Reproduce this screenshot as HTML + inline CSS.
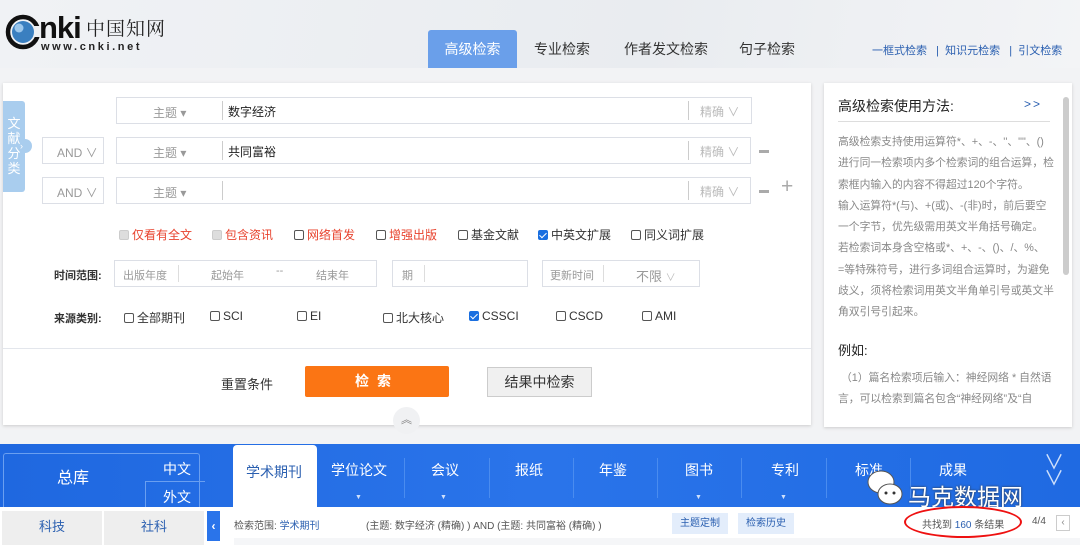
<!DOCTYPE html>
<html><head><meta charset="utf-8"><style>
*{margin:0;padding:0;box-sizing:border-box}
body{width:1080px;height:545px;overflow:hidden;background:#f2f3f5;font-family:"Liberation Sans","Noto Sans CJK SC",sans-serif;position:relative;font-size:12px;color:#333}
.a{position:absolute}
.hdr{left:0;top:0;width:1080px;height:68px;background:linear-gradient(100deg,#f0f2f5,#e9ecf0 60%,#f3f4f6)}
.tab{top:30px;height:38px;line-height:38px;font-size:14px;color:#333}
.box{border:1px solid #dcdfe6;background:#fff;height:27px}
.gray{color:#999}
.cb{display:inline-block;width:10px;height:10px;border:1px solid #555;border-radius:2px;vertical-align:-1px;margin-right:3px;background:#fff}
.cbk{background:#1a6fe0;border-color:#1a6fe0;position:relative}
.cbk:after{content:"";position:absolute;left:2px;top:0;width:3px;height:6px;border:solid #fff;border-width:0 1.5px 1.5px 0;transform:rotate(45deg)}
.cbg{background:#ddd;border-color:#ccc}
.red{color:#e8432e}
.opt{top:226px;font-size:12px}
.src{top:309px;font-size:12px}
.bt{top:460px;font-size:14px;color:#fff}
.help{white-space:nowrap;font-size:10.8px;line-height:21.3px;color:#888}
</style></head><body>
<div class="a hdr"></div>
<!-- logo -->
<svg class="a" style="left:5px;top:13px" width="36" height="38" viewBox="0 0 36 38"><circle cx="18" cy="19" r="15" fill="none" stroke="#111" stroke-width="4.5"/><circle cx="18" cy="19" r="11" fill="#3a7fc0"/><circle cx="14" cy="15" r="4.5" fill="#9cc7ec"/><rect x="29" y="13" width="8" height="11" fill="#eceff3"/></svg>
<div class="a" style="left:39px;top:10px;font-size:31px;font-weight:bold;color:#111;letter-spacing:-1px;font-family:'Liberation Sans',sans-serif">nki</div>
<div class="a" style="left:86px;top:14px;font-size:19px;color:#222;font-family:'Noto Serif CJK SC',serif;letter-spacing:1px">中国知网</div>
<div class="a" style="left:41px;top:41px;font-size:11px;font-weight:bold;color:#222;letter-spacing:2.6px">www.cnki.net</div>
<div class="a tab" style="left:428px;width:89px;background:#6a9fea;color:#fff;text-align:center;border-radius:3px 3px 0 0">高级检索</div>
<div class="a tab" style="left:534px">专业检索</div>
<div class="a tab" style="left:624px">作者发文检索</div>
<div class="a tab" style="left:739px">句子检索</div>
<div class="a" style="left:872px;top:42px;font-size:11px;color:#2a5fb0">一框式检索 &nbsp;&nbsp;| &nbsp;知识元检索 &nbsp;&nbsp;| &nbsp;引文检索</div>

<!-- main panel -->
<div class="a" style="left:3px;top:83px;width:808px;height:342px;background:#fff;box-shadow:0 1px 3px #ccc"></div>
<div class="a" style="left:3px;top:101px;width:22px;height:91px;background:#a9cdee;border-radius:0 3px 3px 0;color:#fff;font-size:13px;line-height:15px;text-align:center;padding-top:15px">文<br>献<br>分<br>类</div>
<div class="a" style="left:20px;top:139px;width:12px;height:14px;background:#a9cdee;border-radius:0 7px 7px 0;color:#fff;font-size:9px;line-height:14px">›</div>

<div class="a box" style="left:116px;top:97px;width:636px"></div>
<div class="a gray" style="left:153px;top:104px;font-size:12px">主题 ▾</div>
<div class="a" style="left:222px;top:101px;width:1px;height:19px;background:#ccc"></div>
<div class="a" style="left:228px;top:103px;font-size:12px;color:#222">数字经济</div>
<div class="a" style="left:688px;top:101px;width:1px;height:19px;background:#ccc"></div>
<div class="a" style="left:700px;top:103px;color:#bbb;font-size:12px">精确 ∨</div>

<div class="a box" style="left:42px;top:137px;width:62px"></div>
<div class="a gray" style="left:57px;top:144px">AND ∨</div>
<div class="a box" style="left:116px;top:137px;width:635px"></div>
<div class="a gray" style="left:153px;top:144px">主题 ▾</div>
<div class="a" style="left:222px;top:141px;width:1px;height:19px;background:#ccc"></div>
<div class="a" style="left:228px;top:143px;color:#222">共同富裕</div>
<div class="a" style="left:688px;top:141px;width:1px;height:19px;background:#ccc"></div>
<div class="a" style="left:700px;top:143px;color:#bbb">精确 ∨</div>
<div class="a" style="left:759px;top:150px;width:10px;height:3px;background:#aaa"></div>

<div class="a box" style="left:42px;top:177px;width:62px"></div>
<div class="a gray" style="left:57px;top:184px">AND ∨</div>
<div class="a box" style="left:116px;top:177px;width:635px"></div>
<div class="a gray" style="left:153px;top:184px">主题 ▾</div>
<div class="a" style="left:222px;top:181px;width:1px;height:19px;background:#ccc"></div>
<div class="a" style="left:688px;top:181px;width:1px;height:19px;background:#ccc"></div>
<div class="a" style="left:700px;top:183px;color:#bbb">精确 ∨</div>
<div class="a" style="left:759px;top:190px;width:10px;height:3px;background:#aaa"></div>
<div class="a" style="left:781px;top:175px;font-size:21px;color:#aaa">+</div>

<div class="a opt red" style="left:119px"><span class="cb cbg"></span>仅看有全文</div>
<div class="a opt red" style="left:212px"><span class="cb cbg"></span>包含资讯</div>
<div class="a opt red" style="left:294px"><span class="cb"></span>网络首发</div>
<div class="a opt red" style="left:376px"><span class="cb"></span>增强出版</div>
<div class="a opt" style="left:458px"><span class="cb"></span>基金文献</div>
<div class="a opt" style="left:538px"><span class="cb cbk"></span>中英文扩展</div>
<div class="a opt" style="left:631px"><span class="cb"></span>同义词扩展</div>

<div class="a" style="left:54px;top:267px;font-size:11px;font-weight:bold;color:#333">时间范围:</div>
<div class="a box" style="left:114px;top:260px;width:263px"></div>
<div class="a gray" style="left:123px;top:267px;font-size:11px">出版年度</div>
<div class="a" style="left:178px;top:265px;width:1px;height:17px;background:#ddd"></div>
<div class="a gray" style="left:211px;top:267px;font-size:11px">起始年</div>
<div class="a gray" style="left:276px;top:265px;font-size:11px">--</div>
<div class="a gray" style="left:316px;top:267px;font-size:11px">结束年</div>
<div class="a box" style="left:392px;top:260px;width:136px"></div>
<div class="a gray" style="left:402px;top:267px;font-size:11px">期</div>
<div class="a" style="left:424px;top:265px;width:1px;height:17px;background:#ddd"></div>
<div class="a box" style="left:542px;top:260px;width:158px"></div>
<div class="a gray" style="left:550px;top:267px;font-size:11px">更新时间</div>
<div class="a" style="left:603px;top:265px;width:1px;height:17px;background:#ddd"></div>
<div class="a gray" style="left:636px;top:266px;font-size:13px">不限 <span style="font-size:10px;color:#bbb">∨</span></div>

<div class="a" style="left:54px;top:310px;font-size:11px;font-weight:bold;color:#333">来源类别:</div>
<div class="a src" style="left:124px"><span class="cb"></span>全部期刊</div>
<div class="a src" style="left:210px"><span class="cb"></span>SCI</div>
<div class="a src" style="left:297px"><span class="cb"></span>EI</div>
<div class="a src" style="left:383px"><span class="cb"></span>北大核心</div>
<div class="a src" style="left:469px"><span class="cb cbk"></span>CSSCI</div>
<div class="a src" style="left:556px"><span class="cb"></span>CSCD</div>
<div class="a src" style="left:642px"><span class="cb"></span>AMI</div>

<div class="a" style="left:3px;top:348px;width:808px;height:1px;background:#e3e6ec"></div>
<div class="a" style="left:221px;top:374px;font-size:13px">重置条件</div>
<div class="a" style="left:305px;top:366px;width:144px;height:31px;background:#fb7514;color:#fff;font-weight:bold;font-size:14px;text-align:center;line-height:31px;letter-spacing:8px;border-radius:2px">检索</div>
<div class="a" style="left:487px;top:367px;width:105px;height:30px;background:#f0f0f0;border:1px solid #ccc;text-align:center;line-height:28px;font-size:14px">结果中检索</div>
<div class="a" style="left:393px;top:407px;width:27px;height:27px;border-radius:50%;background:#f0f1f3;text-align:center;line-height:27px;color:#777;font-size:11px">︽</div>

<!-- right panel -->
<div class="a" style="left:824px;top:83px;width:248px;height:344px;background:#fff;box-shadow:0 1px 3px #ccc"></div>
<div class="a" style="left:838px;top:96px;font-size:14px;color:#222">高级检索使用方法:</div>
<div class="a" style="left:1024px;top:97px;font-size:12px;color:#2a5fb0;letter-spacing:2px">&gt;&gt;</div>
<div class="a" style="left:838px;top:121px;width:212px;height:1px;background:#ddd"></div>
<div class="a" style="left:1063px;top:97px;width:6px;height:178px;background:#ccc;border-radius:3px"></div>
<div class="a help" style="left:838px;top:132px">高级检索支持使用运算符*、+、-、''、""、()<br>进行同一检索项内多个检索词的组合运算，检<br>索框内输入的内容不得超过120个字符。<br>输入运算符*(与)、+(或)、-(非)时，前后要空<br>一个字节，优先级需用英文半角括号确定。<br>若检索词本身含空格或*、+、-、()、/、%、<br>=等特殊符号，进行多词组合运算时，为避免<br>歧义，须将检索词用英文半角单引号或英文半<br>角双引号引起来。</div>
<div class="a" style="left:838px;top:340px;font-size:13px;color:#222">例如:</div>
<div class="a help" style="left:838px;top:368px">&nbsp;（1）篇名检索项后输入：神经网络 * 自然语<br>言，可以检索到篇名包含“神经网络”及“自</div>

<!-- blue band -->
<div class="a" style="left:0;top:444px;width:1080px;height:63px;background:linear-gradient(90deg,#1f68e0,#2a74ea 50%,#1f6ae2)"></div>
<div class="a" style="left:3px;top:453px;width:197px;height:54px;border:1px solid #6a9ff0;border-bottom:none;border-radius:3px 3px 0 0"></div>
<div class="a" style="left:145px;top:481px;width:60px;height:26px;border-left:1px solid #6a9ff0;border-top:1px solid #6a9ff0"></div>
<div class="a" style="left:57px;top:464px;font-size:16px;color:#fff">总库</div>
<div class="a" style="left:163px;top:459px;font-size:14px;color:#fff">中文</div>
<div class="a" style="left:163px;top:487px;font-size:14px;color:#fff">外文</div>
<div class="a" style="left:233px;top:445px;width:84px;height:62px;background:#fff;border-radius:4px 4px 0 0"></div>
<div class="a" style="left:246px;top:462px;font-size:14px;color:#2a5fb0">学术期刊</div>
<div class="a bt" style="left:331px">学位论文</div>
<div class="a bt" style="left:431px">会议</div>
<div class="a bt" style="left:515px">报纸</div>
<div class="a bt" style="left:599px">年鉴</div>
<div class="a bt" style="left:685px">图书</div>
<div class="a bt" style="left:771px">专利</div>
<div class="a bt" style="left:855px">标准</div>
<div class="a bt" style="left:939px">成果</div>
<div class="a" style="left:355px;top:494px;color:#cfe0fb;font-size:7px">▼</div>
<div class="a" style="left:440px;top:494px;color:#cfe0fb;font-size:7px">▼</div>
<div class="a" style="left:695px;top:494px;color:#cfe0fb;font-size:7px">▼</div>
<div class="a" style="left:780px;top:494px;color:#cfe0fb;font-size:7px">▼</div>
<div class="a" style="left:1044px;top:455px;color:#cfe0fb;font-size:20px;line-height:16px">∨<br>∨</div>
<div class="a" style="left:404px;top:458px;width:1px;height:40px;background:#4a8cef"></div>
<div class="a" style="left:489px;top:458px;width:1px;height:40px;background:#4a8cef"></div>
<div class="a" style="left:573px;top:458px;width:1px;height:40px;background:#4a8cef"></div>
<div class="a" style="left:657px;top:458px;width:1px;height:40px;background:#4a8cef"></div>
<div class="a" style="left:741px;top:458px;width:1px;height:40px;background:#4a8cef"></div>
<div class="a" style="left:826px;top:458px;width:1px;height:40px;background:#4a8cef"></div>
<div class="a" style="left:910px;top:458px;width:1px;height:40px;background:#4a8cef"></div>
<!-- watermark -->
<svg class="a" style="left:866px;top:468px" width="40" height="42" viewBox="0 0 40 42"><ellipse cx="15" cy="14" rx="13" ry="11" fill="#fff" stroke="#555"/><ellipse cx="24" cy="26" rx="12" ry="10" fill="#fff" stroke="#555"/><circle cx="20" cy="25" r="1.5" fill="#333"/><circle cx="28" cy="25" r="1.5" fill="#333"/></svg>
<div class="a" style="left:908px;top:478px;font-size:23px;color:#fff;text-shadow:0 0 2px #333">马克数据网</div>

<!-- bottom row -->
<div class="a" style="left:0;top:507px;width:1080px;height:38px;background:#fff"></div>
<div class="a" style="left:2px;top:511px;width:100px;height:34px;background:#eee;color:#2a5fb0;text-align:center;line-height:32px;font-size:13px">科技</div>
<div class="a" style="left:104px;top:511px;width:100px;height:34px;background:#eee;color:#2a5fb0;text-align:center;line-height:32px;font-size:13px">社科</div>
<div class="a" style="left:207px;top:511px;width:13px;height:30px;background:#2a74ea;color:#fff;text-align:center;line-height:30px;font-size:12px;font-weight:bold">‹</div>
<div class="a" style="left:234px;top:517px;font-size:10px;color:#555">检索范围: <b style="color:#2a5fb0;font-weight:normal">学术期刊</b></div>
<div class="a" style="left:366px;top:517px;font-size:10px;color:#555">(主题: 数字经济 (精确) ) AND (主题: 共同富裕 (精确) )</div>
<div class="a" style="left:672px;top:513px;width:56px;height:21px;background:#e3edfb;color:#2a5fb0;font-size:10px;text-align:center;line-height:21px">主题定制</div>
<div class="a" style="left:738px;top:513px;width:56px;height:21px;background:#e3edfb;color:#2a5fb0;font-size:10px;text-align:center;line-height:21px">检索历史</div>
<div class="a" style="left:922px;top:516px;font-size:10px;color:#555">共找到 <span style="color:#2a5fb0">160</span> 条结果</div>
<div class="a" style="left:904px;top:506px;width:118px;height:32px;border:2px solid #e11;border-radius:50%"></div>
<div class="a" style="left:1032px;top:516px;font-size:10px;color:#555">4/4</div>
<div class="a" style="left:1056px;top:515px;width:14px;height:16px;border:1px solid #ccc;color:#888;font-size:10px;text-align:center;line-height:14px">‹</div>
<div class="a" style="left:234px;top:538px;width:846px;height:7px;background:#f5f6f8"></div>
</body></html>
